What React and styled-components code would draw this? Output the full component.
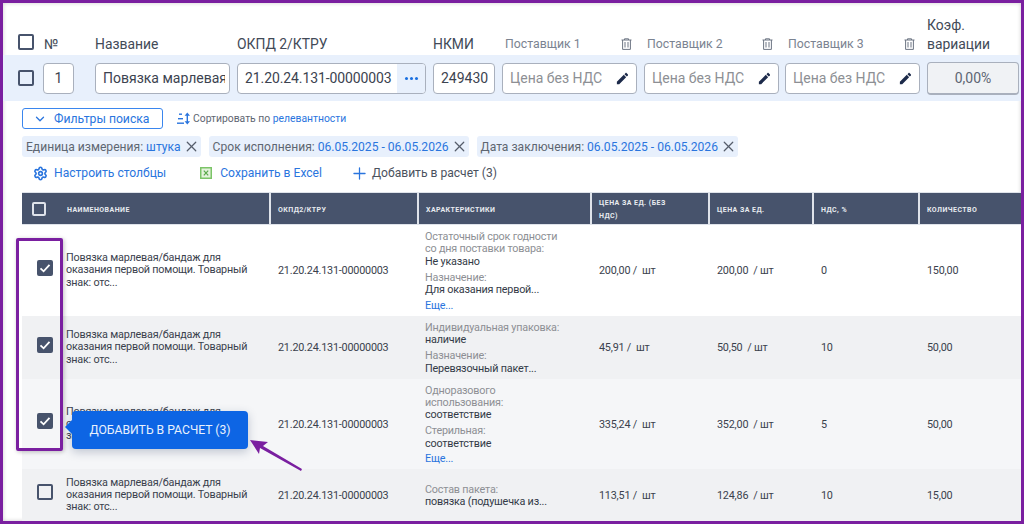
import React from 'react';
import styled, { createGlobalStyle } from 'styled-components';
import { Settings, Plus, X, ChevronDown } from 'lucide-react';

const Global = createGlobalStyle`
  html, body { margin: 0; padding: 0; background: #fff; }
  * { box-sizing: border-box; }
  body { font-family: Roboto, "Noto Sans", sans-serif; color: #333a47; }
`;

const Frame = styled.div`
  position: relative;
  width: 1024px;
  height: 524px;
  border: 3px solid #7a1fa0;
  overflow: hidden;
  background: #fff;
  box-shadow: inset 0 0 4px rgba(0,0,0,.2);
`;

const HeadRow = styled.div`
  display: grid;
  grid-template-columns: 26px 51px 142px 196px 69px 142px 141px 142px 96px;
  align-items: end;
  height: 52px;
  padding-left: 15px;
  padding-bottom: 1px;
  font-size: 13.9px;
  color: #424a57;
`;
const HeadCell = styled.div`
  line-height: 20px;
  height: 20px;
`;
const KoefCell = styled.div`
  line-height: 19px;
`;
const SupplierHead = styled.div`
  display: flex;
  justify-content: space-between;
  align-items: center;
  height: 20px;
  font-size: 12.3px;
  color: #7b8391;
  padding: 0 12px 0 3px;
`;

const Box = styled.span`
  display: inline-flex;
  align-items: center;
  justify-content: center;
  width: ${p => p.$size || 16}px;
  height: ${p => p.$size || 16}px;
  border: 2px solid ${p => p.$light ? '#dfe3ea' : '#47536c'};
  border-radius: 2px;
  background: ${p => p.$checked ? '#47536c' : 'transparent'};
  flex: none;
`;

const InputRow = styled.div`
  display: grid;
  grid-template-columns: 25px 52px 142px 196px 69px 142px 141px 142px 92px;
  align-items: center;
  height: 46px;
  padding-left: 15px;
  background: #e8f0fc;
`;
const Field = styled.div`
  display: flex;
  align-items: center;
  justify-content: ${p => p.$center ? 'center' : 'flex-start'};
  width: ${p => p.$w}px;
  height: 31px;
  background: #fff;
  border: 1px solid #a9b0bd;
  border-radius: 4px;
  font-size: 14px;
  color: #3c4350;
  padding: ${p => p.$center ? '0' : '0 0 0 7px'};
  overflow: hidden;
  white-space: nowrap;
`;
const ClipText = styled.span`
  display: block;
  width: 122px;
  overflow: hidden;
`;
const CodeText = styled.span`
  flex: 1;
  letter-spacing: -0.1px;
`;
const DotsBtn = styled.span`
  display: flex;
  align-items: center;
  justify-content: center;
  gap: 2px;
  width: 28px;
  height: 100%;
  background: #e8f0fc;
  flex: none;
`;
const Dot = styled.i`
  width: 3px;
  height: 3px;
  border-radius: 50%;
  background: #1a6fe0;
`;
const PriceField = styled(Field)`
  justify-content: space-between;
  padding-right: 6px;
  color: #8d8f94;
`;
const Koef = styled.div`
  width: 92px;
  height: 33px;
  display: flex;
  align-items: center;
  justify-content: center;
  background: #f0f2f5;
  border: 1px solid #a9b0bd;
  border-bottom-width: 2px;
  border-radius: 4px;
  font-size: 14px;
  color: #5d6573;
`;

const FilterBar = styled.div`
  display: flex;
  align-items: center;
  gap: 14px;
  height: 21px;
  margin: 7px 0 0 19px;
`;
const FilterBtn = styled.div`
  display: flex;
  align-items: center;
  width: 141px;
  height: 21px;
  border: 1px solid #3a86ee;
  border-radius: 3px;
  padding-left: 10px;
  gap: 7px;
  font-size: 12.2px;
  color: #2a75de;
`;
const SortText = styled.div`
  display: flex;
  align-items: center;
  gap: 3px;
  font-size: 10.35px;
  color: #5e6671;
`;
const Accent = styled.span`
  color: #2a75de;
`;

const Chips = styled.div`
  display: flex;
  gap: 8px;
  margin: 7px 0 0 19px;
`;
const Chip = styled.div`
  display: flex;
  align-items: center;
  gap: 2px;
  height: 21px;
  padding: 0 1px 0 4px;
  background: #e8f0fc;
  border-radius: 3px;
  font-size: 12.1px;
  color: #5e6671;
  white-space: nowrap;
`;

const Actions = styled.div`
  display: flex;
  align-items: center;
  height: 20px;
  margin: 6px 0 0 30px;
  font-size: 12.1px;
`;
const Action = styled.div`
  display: flex;
  align-items: center;
  gap: ${p => p.$gap}px;
  margin-right: ${p => p.$mr}px;
  color: ${p => p.$dark ? '#4b525e' : '#2a75de'};
  white-space: nowrap;
`;

const Table = styled.div`
  margin: 9px 0 0 19px;
  width: 999px;
`;
const cols = '249px 148px 173px 118px 104px 106px 101px';
const THead = styled.div`
  display: grid;
  grid-template-columns: ${cols};
  height: 33px;
  background: #47536c;
  border-top: 1px solid #dfe3ea;
  border-bottom: 1px solid #dfe3ea;
`;
const Th = styled.div`
  display: flex;
  align-items: center;
  gap: 21px;
  padding: 3px 7px 0 ${p => p.$first ? '10px' : '7px'};
  border-right: 2px solid #dfe3ea;
  font-size: 7px;
  line-height: 13px;
  font-weight: 700;
  letter-spacing: 0.45px;
  text-transform: uppercase;
  color: #e8ebf0;
  &:last-child { border-right: none; }
`;
const HeadBox = styled(Box)`
  margin-bottom: 3px;
`;
const Row = styled.div`
  display: grid;
  grid-template-columns: ${cols};
  height: ${p => p.$h}px;
  background: ${p => p.$bg};
  align-items: center;
  font-size: 10.8px;
  letter-spacing: -0.2px;
  color: #3a414d;
`;
const NameCell = styled.div`
  display: flex;
  align-items: center;
  gap: 13px;
  padding-left: 15px;
`;
const RowBox = styled(Box)`
  margin-bottom: 5px;
`;
const Name = styled.div`
  width: 190px;
  line-height: 12.2px;
`;
const Cell = styled.div`
  padding-left: 7px;
  white-space: pre;
`;
const Chars = styled.div`
  padding: 2px 0 0 6px;
  line-height: 12.4px;
`;
const CharLabel = styled.div`
  color: #8d8f94;
  white-space: pre-line;
  margin-top: ${p => p.$gap ? 3.5 : 0}px;
`;
const CharValue = styled.div`
  color: #333a47;
`;
const More = styled.div`
  color: #2a75de;
  margin-top: 3px;
`;

const Highlight = styled.div`
  position: absolute;
  left: 13px;
  top: 235px;
  width: 47px;
  height: 213px;
  border: 3px solid #7a1fa0;
  border-radius: 2px;
  box-shadow: 1px 1px 4px rgba(0,0,0,.25);
`;
const Tooltip = styled.div`
  position: absolute;
  left: 69px;
  top: 408px;
  width: 176px;
  height: 38px;
  display: flex;
  align-items: center;
  justify-content: center;
  background: #0d65e4;
  border-radius: 4px;
  color: #e9f1fd;
  font-size: 12.2px;
  font-weight: 400;
  box-shadow: 0 3px 10px rgba(30,50,90,.25);
  &::before {
    content: '';
    position: absolute;
    left: -7px;
    top: 9px;
    border-style: solid;
    border-width: 7px 7px 7px 0;
    border-color: transparent #0d65e4 transparent transparent;
  }
`;
const ArrowSvg = styled.svg`
  position: absolute;
  left: 245px;
  top: 431px;
`;

const Check = () => (
  <svg width="12" height="12" viewBox="0 0 12 12"><path d="M1.5 6.3 4.6 9.3 10.5 2.8" fill="none" stroke="#fff" strokeWidth="1.8" /></svg>
);
const Pencil = () => (
  <svg width="15" height="15" viewBox="0 0 24 24" fill="#1c2a4a"><path d="M3 17.25V21h3.75L17.81 9.94l-3.75-3.75L3 17.25zM20.71 7.04c.39-.39.39-1.02 0-1.41l-2.34-2.34c-.39-.39-1.02-.39-1.41 0l-1.83 1.83 3.75 3.75 1.83-1.83z" /></svg>
);
const Trash = () => (
  <svg width="11" height="12" viewBox="0 0 11 12" fill="none" stroke="#6d7583"><path d="M0.5 2h10M3.5 2V.8h4V2M1.6 2v9.4h7.8V2M4 4v5.5M7 4v5.5" strokeWidth="1" /></svg>
);
const SortIcon = () => (
  <svg width="13" height="13" viewBox="0 0 13 13" fill="#2a75de"><rect x="2" y="1.5" width="3" height="1.4" /><rect x="1" y="6" width="5" height="1.4" /><rect x="0" y="10.5" width="7" height="1.4" /><path d="M10.3 0.5 13 3.8H11V9.2H13L10.3 12.5 7.6 9.2H9.6V3.8H7.6Z" /></svg>
);
const Excel = () => (
  <svg width="12" height="12" viewBox="0 0 12 12" fill="none"><rect x="0.75" y="0.75" width="10.5" height="10.5" fill="#e4f2dc" stroke="#7cc468" strokeWidth="1.5" /><path d="M3.8 3.6 8.2 8.4M8.2 3.6 3.8 8.4" stroke="#5aa84a" strokeWidth="1.2" /></svg>
);

const rows = [
  { h: 91, bg: '#fff', c: true, p: '200,00 /  шт', q: '200,00  / шт', n: '0', k: '150,00',
    chars: [['Остаточный срок годности\nсо дня поставки товара:', 'Не указано'], ['Назначение:', 'Для оказания первой...']], more: true },
  { h: 63, bg: '#f0f1f3', c: true, p: '45,91 /  шт', q: '50,50  / шт', n: '10', k: '50,00',
    chars: [['Индивидуальная упаковка:', 'наличие'], ['Назначение:', 'Перевязочный пакет...']] },
  { h: 90, bg: '#f5f6f8', c: true, p: '335,24 /  шт', q: '352,00  / шт', n: '5', k: '50,00',
    chars: [['Одноразового\nиспользования:', 'соответствие'], ['Стерильная:', 'соответствие']], more: true },
  { h: 52, bg: '#f0f1f3', c: false, p: '113,51 /  шт', q: '124,86  / шт', n: '10', k: '15,00',
    chars: [['Состав пакета:', 'повязка (подушечка из...']] },
];

const Close = () => <X size={17} strokeWidth={1.7} color="#555d6b" />;

export default function App() {
  return (
    <>
      <Global />
      <Frame>
        <HeadRow>
          <HeadCell><Box /></HeadCell>
          <HeadCell>№</HeadCell>
          <HeadCell>Название</HeadCell>
          <HeadCell>ОКПД 2/КТРУ</HeadCell>
          <HeadCell>НКМИ</HeadCell>
          {[1, 2, 3].map(i => (
            <SupplierHead key={i}><span>Поставщик {i}</span><Trash /></SupplierHead>
          ))}
          <KoefCell>Коэф.<br />вариации</KoefCell>
        </HeadRow>
        <InputRow>
          <Box />
          <Field $w={31} $center>1</Field>
          <Field $w={135}><ClipText>Повязка марлевая</ClipText></Field>
          <Field $w={189}><CodeText>21.20.24.131-00000003</CodeText><DotsBtn><Dot /><Dot /><Dot /></DotsBtn></Field>
          <Field $w={62}>249430</Field>
          {[1, 2, 3].map(i => (
            <PriceField key={i} $w={135}>Цена без НДС<Pencil /></PriceField>
          ))}
          <Koef>0,00%</Koef>
        </InputRow>
        <FilterBar>
          <FilterBtn><ChevronDown size={14} strokeWidth={2.2} />Фильтры поиска</FilterBtn>
          <SortText><SortIcon /><span>Сортировать по <Accent>релевантности</Accent></span></SortText>
        </FilterBar>
        <Chips>
          <Chip><span>Единица измерения: <Accent>штука</Accent></span><Close /></Chip>
          <Chip><span>Срок исполнения: <Accent>06.05.2025 - 06.05.2026</Accent></span><Close /></Chip>
          <Chip><span>Дата заключения: <Accent>06.05.2025 - 06.05.2026</Accent></span><Close /></Chip>
        </Chips>
        <Actions>
          <Action $gap={6} $mr={34}><Settings size={15} strokeWidth={2.6} />Настроить столбцы</Action>
          <Action $gap={8} $mr={28}><Excel />Сохранить в Excel</Action>
          <Action $gap={3} $mr={0} $dark><Plus size={19} color="#2a75de" strokeWidth={1.6} />Добавить в расчет (3)</Action>
        </Actions>
        <Table>
          <THead>
            <Th $first><HeadBox $light $size={14} />Наименование</Th>
            <Th>ОКПД2/КТРУ</Th>
            <Th>Характеристики</Th>
            <Th><span>Цена за ед. (без<br />НДС)</span></Th>
            <Th>Цена за ед.</Th>
            <Th>НДС, %</Th>
            <Th>Количество</Th>
          </THead>
          {rows.map((r, i) => (
            <Row key={i} $h={r.h} $bg={r.bg}>
              <NameCell>
                <RowBox $checked={r.c}>{r.c && <Check />}</RowBox>
                <Name>Повязка марлевая/бандаж для оказания первой помощи. Товарный знак: отс...</Name>
              </NameCell>
              <Cell>21.20.24.131-00000003</Cell>
              <Chars>
                {r.chars.map(([l, v], j) => (
                  <div key={j}>
                    <CharLabel $gap={j > 0}>{l}</CharLabel>
                    <CharValue>{v}</CharValue>
                  </div>
                ))}
                {r.more && <More>Еще...</More>}
              </Chars>
              <Cell>{r.p}</Cell>
              <Cell>{r.q}</Cell>
              <Cell>{r.n}</Cell>
              <Cell>{r.k}</Cell>
            </Row>
          ))}
        </Table>
        <Highlight />
        <Tooltip>ДОБАВИТЬ В РАСЧЕТ (3)</Tooltip>
        <ArrowSvg width="60" height="40" viewBox="0 0 60 40">
          <path d="M2 6 L20 8 L15 12 L54 35 L53 37 L12 14 L11 20 Z" fill="#7a1fa0" />
        </ArrowSvg>
      </Frame>
    </>
  );
}
